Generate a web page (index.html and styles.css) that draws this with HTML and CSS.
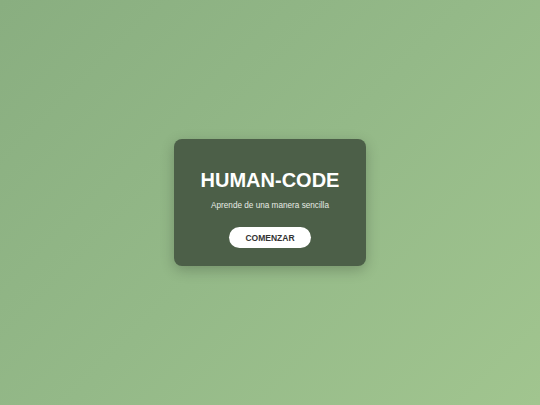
FILE: index.html
```html
<!DOCTYPE html>
<html lang="es">
<head>
<meta charset="utf-8">
<title>HUMAN-CODE</title>
<link rel="stylesheet" href="styles.css">
</head>
<body>
<main class="page">
  <section class="card">
    <h1 class="title">HUMAN-CODE</h1>
    <p class="subtitle">Aprende de una manera sencilla</p>
    <button class="btn" type="button">COMENZAR</button>
  </section>
</main>
</body>
</html>
```
FILE: styles.css
```css
html, body {
  margin: 0;
  padding: 0;
  height: 100%;
}
body {
  font-family: "Liberation Sans", Arial, sans-serif;
  background: linear-gradient(135deg, #89ae80 0%, #94b988 50%, #a1c58f 100%);
}
.page {
  height: 100%;
  display: flex;
  align-items: center;
  justify-content: center;
}
.card {
  width: 192px;
  box-sizing: border-box;
  padding: 30px 10px 18px;
  background: #4c5f48;
  border-radius: 8px;
  box-shadow: 0 4px 14px rgba(0, 0, 0, 0.22);
  display: flex;
  flex-direction: column;
  align-items: center;
  text-align: center;
}
.title {
  margin: 0;
  font-size: 20px;
  line-height: 23px;
  font-weight: 700;
  color: #ffffff;
}
.subtitle {
  margin: 9px 0 0;
  font-size: 8.2px;
  line-height: 10px;
  color: #e6ebe4;
}
.btn {
  margin-top: 16px;
  width: 82px;
  height: 21px;
  border: none;
  border-radius: 11px;
  background: #ffffff;
  color: #333333;
  font-family: "Liberation Sans", Arial, sans-serif;
  font-size: 8.5px;
  font-weight: 700;
  padding: 0;
}
```
